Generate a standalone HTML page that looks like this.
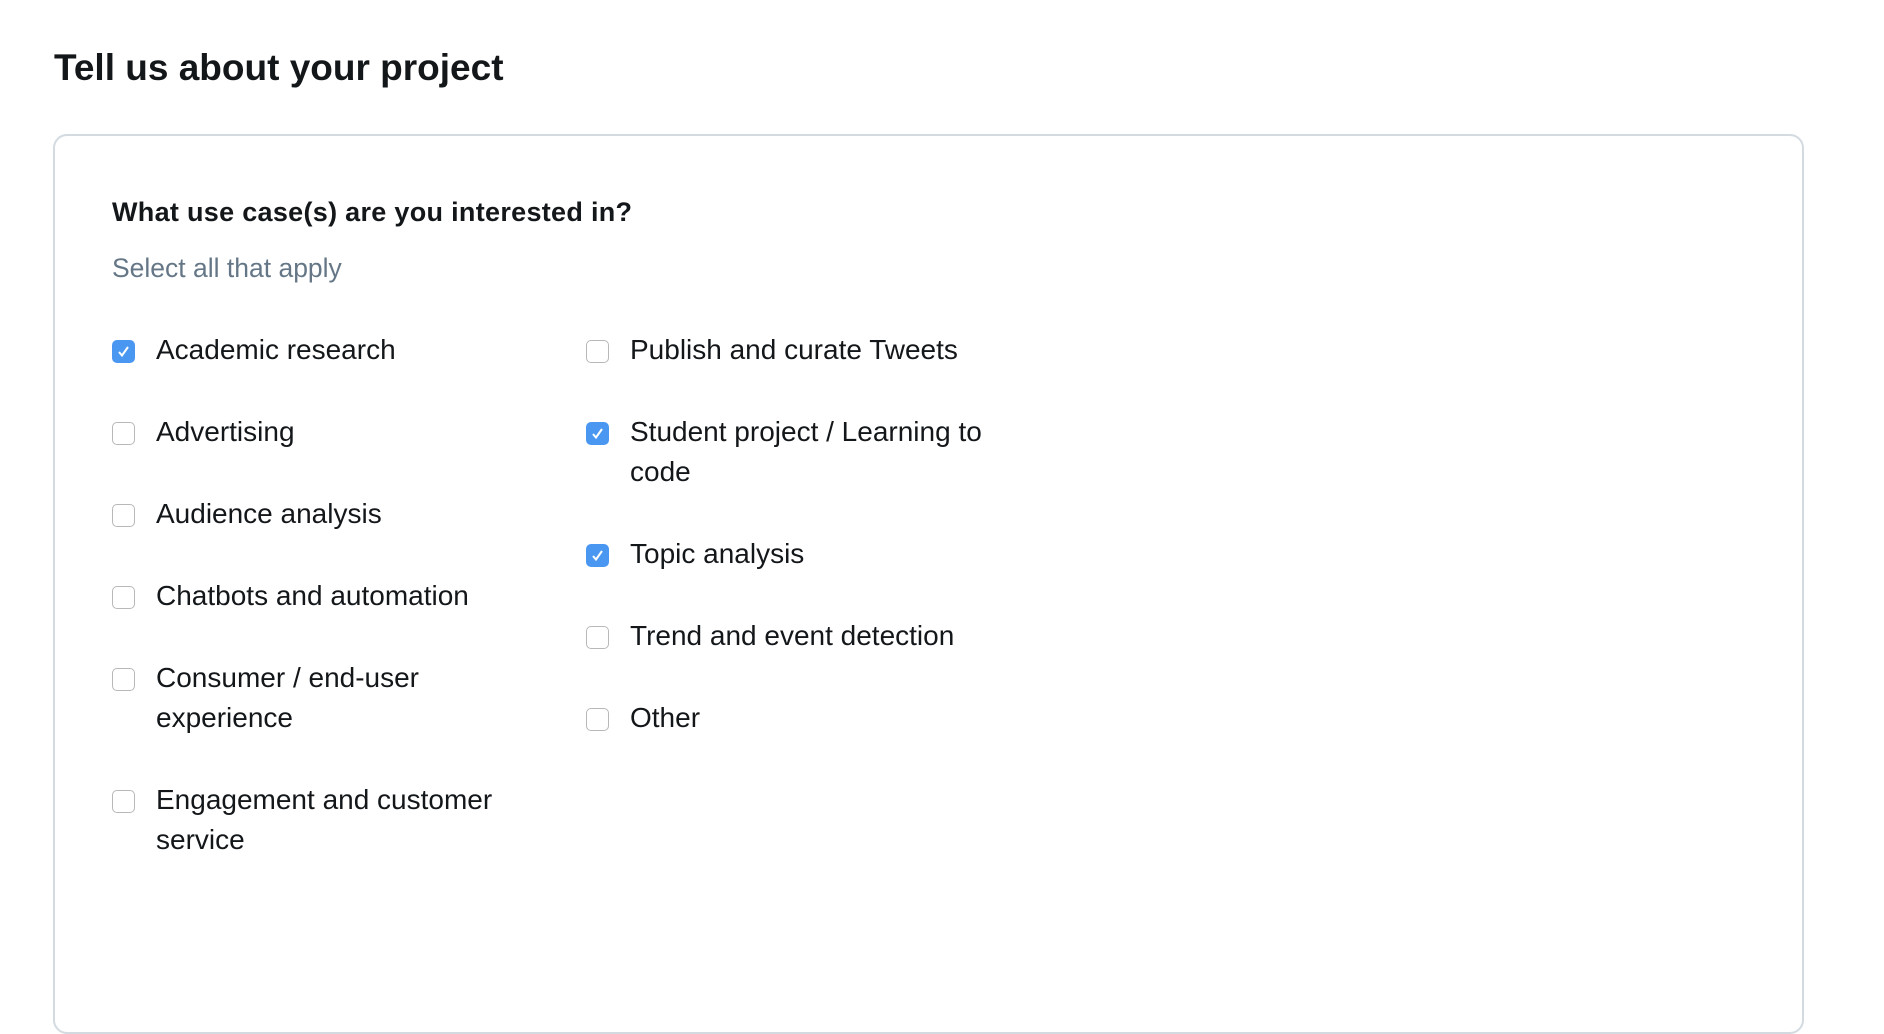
<!DOCTYPE html>
<html><head><meta charset="utf-8"><style>
*{margin:0;padding:0;box-sizing:border-box}
body{width:1884px;height:916px;overflow:hidden;background:#fff;font-family:"Liberation Sans",Arial,sans-serif;color:#14171a;position:relative}
h1{position:absolute;left:54px;top:44px;font-size:37px;font-weight:bold;line-height:48px;white-space:nowrap}
.card{position:absolute;left:53px;top:134px;width:1751px;height:900px;border:2px solid #d3dbe1;border-radius:14px}
.q{position:absolute;left:112px;top:195px;font-size:27px;font-weight:bold;line-height:34px;letter-spacing:0.3px;white-space:nowrap}
.s{position:absolute;left:112px;top:252px;font-size:26.5px;color:#657786;line-height:32px;white-space:nowrap}
.col{position:absolute;top:330px}
.it{position:relative;padding-left:44px;font-size:28px;line-height:40px;margin-bottom:42px;white-space:nowrap}
.cb{position:absolute;left:0;top:10px;width:23px;height:23px;border:1.5px solid #b8b8b8;border-radius:5px;background:#fff}
.cb.on{background:#4a97f2;border-color:#4a97f2}
.cb.on svg{position:absolute;left:3px;top:3px}
</style></head><body>
<h1>Tell us about your project</h1>
<div class="card"></div>
<div class="q">What use case(s) are you interested in?</div>
<div class="s">Select all that apply</div>
<div class="col" style="left:112px">
<div class="it"><span class="cb on"><svg width="15" height="15" viewBox="0 0 15 15"><path d="M3 8 L6 11.5 L12 3" fill="none" stroke="#fff" stroke-width="2"/></svg></span>Academic research</div>
<div class="it"><span class="cb"></span>Advertising</div>
<div class="it"><span class="cb"></span>Audience analysis</div>
<div class="it"><span class="cb"></span>Chatbots and automation</div>
<div class="it"><span class="cb"></span>Consumer / end-user<br>experience</div>
<div class="it"><span class="cb"></span>Engagement and customer<br>service</div>
</div>
<div class="col" style="left:586px">
<div class="it"><span class="cb"></span>Publish and curate Tweets</div>
<div class="it"><span class="cb on"><svg width="15" height="15" viewBox="0 0 15 15"><path d="M3 8 L6 11.5 L12 3" fill="none" stroke="#fff" stroke-width="2"/></svg></span>Student project / Learning to<br>code</div>
<div class="it"><span class="cb on"><svg width="15" height="15" viewBox="0 0 15 15"><path d="M3 8 L6 11.5 L12 3" fill="none" stroke="#fff" stroke-width="2"/></svg></span>Topic analysis</div>
<div class="it"><span class="cb"></span>Trend and event detection</div>
<div class="it"><span class="cb"></span>Other</div>
</div>
</body></html>
